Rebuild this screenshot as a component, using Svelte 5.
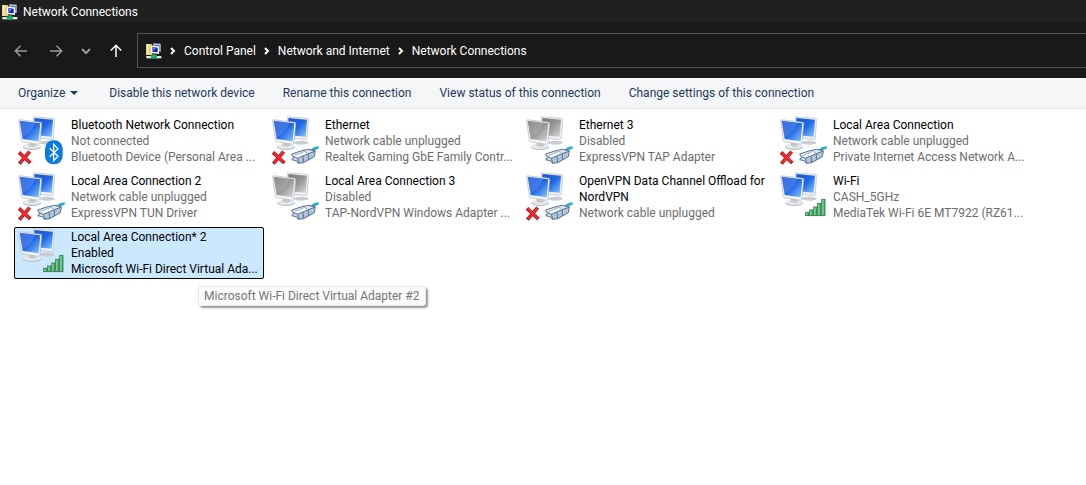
<script lang="ts">
  type Badge = 'bluetooth' | 'cable' | 'wifi';

  interface Connection {
    name: string;
    status: string;
    device: string;
    badge: Badge;
    disabled?: boolean;
    error?: boolean;
    tip?: string;
  }

  const crumbs = ['Control Panel', 'Network and Internet', 'Network Connections'];

  const commands = [
    'Disable this network device',
    'Rename this connection',
    'View status of this connection',
    'Change settings of this connection',
  ];

  const connections: Connection[] = [
    { name: 'Bluetooth Network Connection', status: 'Not connected', device: 'Bluetooth Device (Personal Area ...', badge: 'bluetooth', error: true },
    { name: 'Ethernet', status: 'Network cable unplugged', device: 'Realtek Gaming GbE Family Contr...', badge: 'cable', error: true },
    { name: 'Ethernet 3', status: 'Disabled', device: 'ExpressVPN TAP Adapter', badge: 'cable', disabled: true },
    { name: 'Local Area Connection', status: 'Network cable unplugged', device: 'Private Internet Access Network A...', badge: 'cable', error: true },
    { name: 'Local Area Connection 2', status: 'Network cable unplugged', device: 'ExpressVPN TUN Driver', badge: 'cable', error: true },
    { name: 'Local Area Connection 3', status: 'Disabled', device: 'TAP-NordVPN Windows Adapter ...', badge: 'cable', disabled: true },
    { name: 'OpenVPN Data Channel Offload for NordVPN', status: 'Network cable unplugged', device: '', badge: 'cable', error: true },
    { name: 'Wi-Fi', status: 'CASH_5GHz', device: 'MediaTek Wi-Fi 6E MT7922 (RZ61...', badge: 'wifi' },
    { name: 'Local Area Connection* 2', status: 'Enabled', device: 'Microsoft Wi-Fi Direct Virtual Ada...', badge: 'wifi', tip: 'Microsoft Wi-Fi Direct Virtual Adapter #2' },
  ];

  // signal bar heights, left to right
  const bars = [10, 17, 26, 37, 49];

  let selected = $state(8);
</script>

{#snippet folderIcon()}
  <svg class="folder" viewBox="0 0 48 48" aria-hidden="true">
    <path d="M1 3h15l3 3v30H1z" fill="#f0d074" />
    <path d="M1 3h7l-2 33H1z" fill="#fbeeb4" />
    <path d="M22 1l22 1v24l-22-2z" fill="#c6d2e6" />
    <path d="M26 5l15 1v14l-15-1z" fill="#5470d4" />
    <path d="M15 8l24 2v23l-24-3z" fill="#f4f6fa" />
    <path d="M19 12l16 2v14l-16-2z" fill="#1424a4" />
    <path d="M19 12l12 2-9 10-3 1z" fill="#5c7cf0" />
    <path d="M20 33h9v7h-9z" fill="#13a05c" />
    <path d="M1 39h45v7H1z" fill="#e4ecee" />
    <path d="M14 37h19v9H14z" fill="#18b46a" />
  </svg>
{/snippet}

{#snippet monitors(off: boolean)}
  <g>
    <ellipse cx="94" cy="86" rx="22" ry="6" fill="#c9cdd1" />
    <path d="M52 8l61 5q3 1 3 4l-4 56q-1 4-5 4l-56-6z" fill="#eceef0" stroke="#bcc1c5" stroke-width="2" />
    <path d="M55 12l56 5-4 51-51-5z" fill={off ? 'url(#off)' : 'url(#on)'} />
    <ellipse cx="48" cy="99" rx="27" ry="9" fill="#b4b9bd" />
    <ellipse cx="48" cy="97" rx="26" ry="8" fill="#e6e9eb" />
    <path d="M38 80l20 2 2 14q-11 4-22 0z" fill="#c3c8cc" />
    <path d="M10 17l64 8q3 1 3 4l-5 58q-1 4-5 4l-48-8q-3-1-3-4L8 21q0-4 2-4z" fill="#f2f4f5" stroke="#b4bac0" stroke-width="2" />
    <path d="M11 20l62 8-5 54-48-7z" fill={off ? 'url(#off)' : 'url(#on)'} />
    <path d="M11 20l46 6q-6 28-38 44z" fill="#fff" opacity=".14" />
  </g>
{/snippet}

{#snippet badgeIcon(kind: Badge)}
  {#if kind === 'bluetooth'}
    <rect x="87" y="79" width="53" height="72" rx="25" fill="#0a7be4" />
    <path d="M101 103l25 24-13 13V91l13 13-25 24" fill="none" stroke="#fff" stroke-width="4" />
  {:else if kind === 'cable'}
    <path d="M118 109l14-9 14-4v8l-10 4-6 12z" fill="#2fa9d0" />
    <path d="M65 120l31-10 20-4 20 5-3 17-32 18-16 2-6-8-14-3z" fill="#dbe5f0" />
    <path d="M70 125l34-12 14 4-33 14z" fill="#fff" />
    <path d="M82 133l33-14 20-6-3 15-31 18-16 2z" fill="#b4c6da" />
    <path d="M65 120l31-10 20-4 20 5-3 17-32 18-16 2-6-8-14-3 7-6zM82 133l33-14 20-7M86 147l-4-14-12-5M101 145l-2-18M115 137v-18" fill="none" stroke="#54708f" stroke-width="3" />
    <path d="M74 125l27-11M99 110l16 8" stroke="#7d94ac" stroke-width="2" />
  {:else}
    {#each bars as h, n}
      <rect x={83 + n * 12} y={137 - h} width="10" height={h} fill="url(#bar)" stroke="#237a45" stroke-width="2.500" />
    {/each}
  {/if}
{/snippet}

<svg class="defs" aria-hidden="true">
  <defs>
    <linearGradient id="on" x1="0" y1="0" x2="1" y2="1">
      <stop offset="0" stop-color="#1d55d6" />
      <stop offset=".5" stop-color="#2066e6" />
      <stop offset="1" stop-color="#8acafc" />
    </linearGradient>
    <linearGradient id="off" x1="0" y1="0" x2="1" y2="1">
      <stop offset="0" stop-color="#777" />
      <stop offset=".5" stop-color="#969696" />
      <stop offset="1" stop-color="#dadada" />
    </linearGradient>
    <linearGradient id="bar" x1="0" y1="0" x2="1" y2="0">
      <stop offset="0" stop-color="#9adcae" />
      <stop offset="1" stop-color="#3fa663" />
    </linearGradient>
  </defs>
</svg>

<div class="window">
  <header class="title-bar">
    {@render folderIcon()}
    <span>Network Connections</span>
  </header>

  <nav class="nav-bar">
    <div class="nav-buttons">
      <button class="dim" aria-label="Back">
        <svg viewBox="0 0 16 16"><path d="M14 8H2.500M7.500 2.800L2.300 8l5.200 5.200" /></svg>
      </button>
      <button class="dim" aria-label="Forward">
        <svg viewBox="0 0 16 16"><path d="M2 8h11.500M8.500 2.800L13.700 8l-5.200 5.200" /></svg>
      </button>
      <button class="dim small" aria-label="Recent locations">
        <svg viewBox="0 0 10 16"><path d="M1 6l4 4 4-4" /></svg>
      </button>
      <button aria-label="Up">
        <svg viewBox="0 0 16 16"><path d="M8 14V2.500M2.800 7.500L8 2.300l5.200 5.200" /></svg>
      </button>
    </div>
    <div class="address">
      {@render folderIcon()}
      {#each crumbs as crumb}
        <svg class="chevron" viewBox="0 0 8 8" aria-hidden="true"><path d="M2 1l3 3-3 3" /></svg>
        <a href="#{crumb}">{crumb}</a>
      {/each}
    </div>
  </nav>

  <div class="command-bar">
    <button class="organize">Organize <i></i></button>
    {#each commands as command}
      <button>{command}</button>
    {/each}
  </div>

  <main class="grid">
    {#each connections as c, i}
      <div class="cell">
        <button class="item" class:selected={selected === i} onclick={() => (selected = i)}>
          <svg class="icon" viewBox="6 6 144 150" aria-hidden="true">
            {@render monitors(!!c.disabled)}
            {@render badgeIcon(c.badge)}
            {#if c.error}
              <path d="M9 115l34 32M41 113L10 149" fill="none" stroke="#b01418" stroke-width="11" />
              <path d="M11 116l30 29M40 115L12 146" fill="none" stroke="#ee2a2e" stroke-width="7" />
            {/if}
          </svg>
          <span class="text">
            <span class="name">{c.name}</span>
            <span>{c.status}</span>
            {#if c.device}<span>{c.device}</span>{/if}
          </span>
        </button>
        {#if c.tip && selected === i}<span class="tip" role="tooltip">{c.tip}</span>{/if}
      </div>
    {/each}
  </main>
</div>

<style>
  :global(body) { background: #fff; }

  .defs { position: absolute; width: 0; height: 0; }

  .window {
    min-height: 100vh;
    font-family: "Segoe UI", Roboto, sans-serif;
    font-size: 12px; line-height: 16px; color: #000;
  }
  button {
    font: inherit; color: inherit; background: none; border: 0; padding: 0;
    text-align: left; white-space: nowrap;
  }
  .folder { width: 16px; height: 16px; flex-shrink: 0; }

  .title-bar {
    display: flex; align-items: center; gap: 5px;
    height: 23px; padding: 0 2px;
    background: #202020; color: #fff;
  }

  .nav-bar {
    display: flex; align-items: center; height: 55px;
    background: #191919; color: #fff;
  }
  .nav-buttons { display: flex; align-items: center; gap: 19px; padding: 0 13px; }
  .nav-buttons svg {
    display: block; width: 16px; height: 16px;
    fill: none; stroke: #fff; stroke-width: 1.5;
  }
  .nav-buttons .dim svg { stroke: #9a9a9a; }
  .nav-buttons .small { margin: 0 -2px; }
  .nav-buttons .small svg { width: 10px; stroke-width: 2; }
  .address {
    flex: 1; display: flex; align-items: center;
    height: 33px; padding: 0 8px;
    border: 1px solid #535353; border-right: 0;
  }
  .address a { color: #fff; text-decoration: none; white-space: nowrap; }
  .chevron { width: 8px; height: 8px; margin: 0 7px; fill: none; stroke: #fff; stroke-width: 2; }

  .command-bar {
    display: flex; align-items: center; gap: 28px;
    height: 30px; padding: 0 18px;
    background: #f5f6f7; border-bottom: 1px solid #e5e7ea; color: #1e395b;
  }
  .organize { display: flex; align-items: center; gap: 5px; padding-right: 3px; }
  .organize i { border: 4px solid transparent; border-top-color: #1e395b; border-bottom: 0; }

  .grid {
    display: grid; grid-template-columns: repeat(auto-fill, 250px); gap: 4px;
    padding: 6px 14px;
  }
  .cell { position: relative; }
  .item {
    display: flex; align-items: flex-start; gap: 5px;
    width: 100%; min-height: 52px; padding: 0 3px;
    border: 1px solid transparent; border-radius: 2px;
  }
  .icon { width: 48px; height: 50px; flex-shrink: 0; }
  .text { display: flex; flex-direction: column; color: #6d6d6d; padding-top: 1px; }
  .name { color: #000; white-space: normal; }
  .selected { background: #cce8ff; border-color: #000; }
  .selected .text { color: #000; }
  .tip {
    position: absolute; left: 184px; top: 59px;
    padding: 0 5px; background: #fbfbfb; border: 1px solid #e8e8e8; border-radius: 3px;
    box-shadow: 2px 2px 2px #999; color: #767676; line-height: 18px; white-space: nowrap;
  }
</style>
